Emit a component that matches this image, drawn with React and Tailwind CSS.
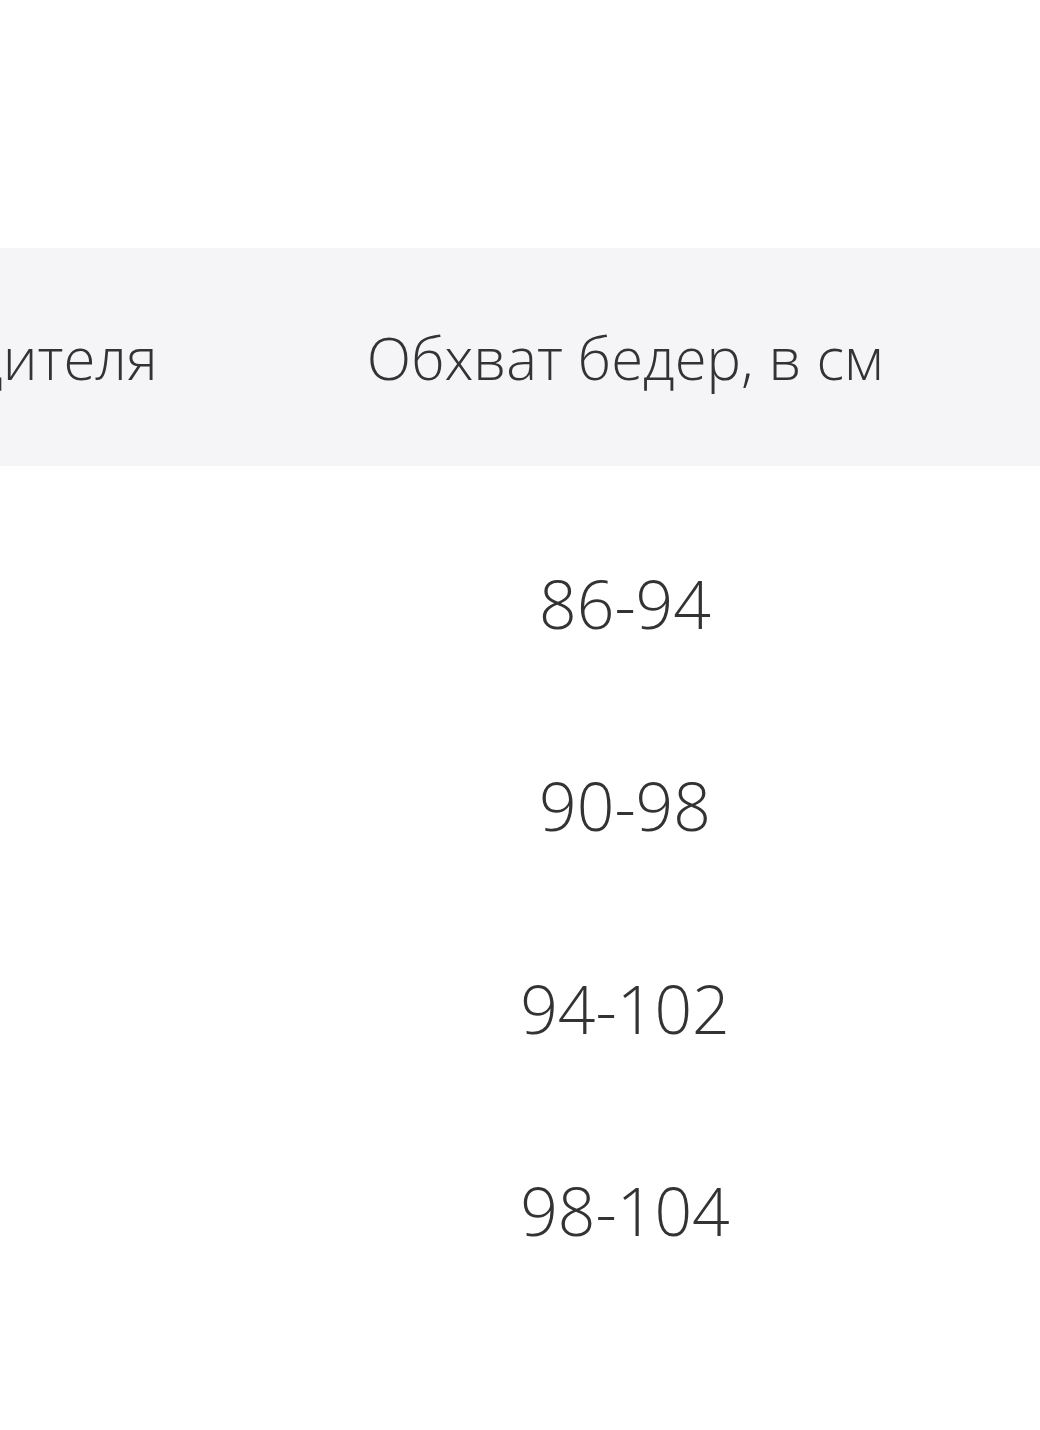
import React from 'react';

const rows = [
  { size: 'S', hips: '86-94' },
  { size: 'M', hips: '90-98' },
  { size: 'L', hips: '94-102' },
  { size: 'XL', hips: '98-104' },
];

const App = () => {
  return (
    <div className="w-[1040px] h-[1430px] bg-white overflow-hidden text-[#333333] font-['Open_Sans',sans-serif] font-light">
      <div className="pt-[248px] ml-[-524px] w-[1564px]">
        {/* Header */}
        <div className="flex h-[218px] items-center bg-[#f5f5f7]">
          <div className="w-[734px] text-center text-[58px] whitespace-nowrap">Размер производителя</div>
          <div className="w-[830px] text-center text-[58px] whitespace-nowrap">Обхват бедер, в см</div>
        </div>

        {/* Rows */}
        <div className="pt-[36px]">
          {rows.map((r) => (
            <div key={r.size} className="flex h-[202.5px] items-center">
              <div className="w-[734px] text-center text-[66px]">{r.size}</div>
              <div className="w-[830px] text-center text-[66px]">{r.hips}</div>
            </div>
          ))}
        </div>
      </div>
    </div>
  );
};

export default App;
